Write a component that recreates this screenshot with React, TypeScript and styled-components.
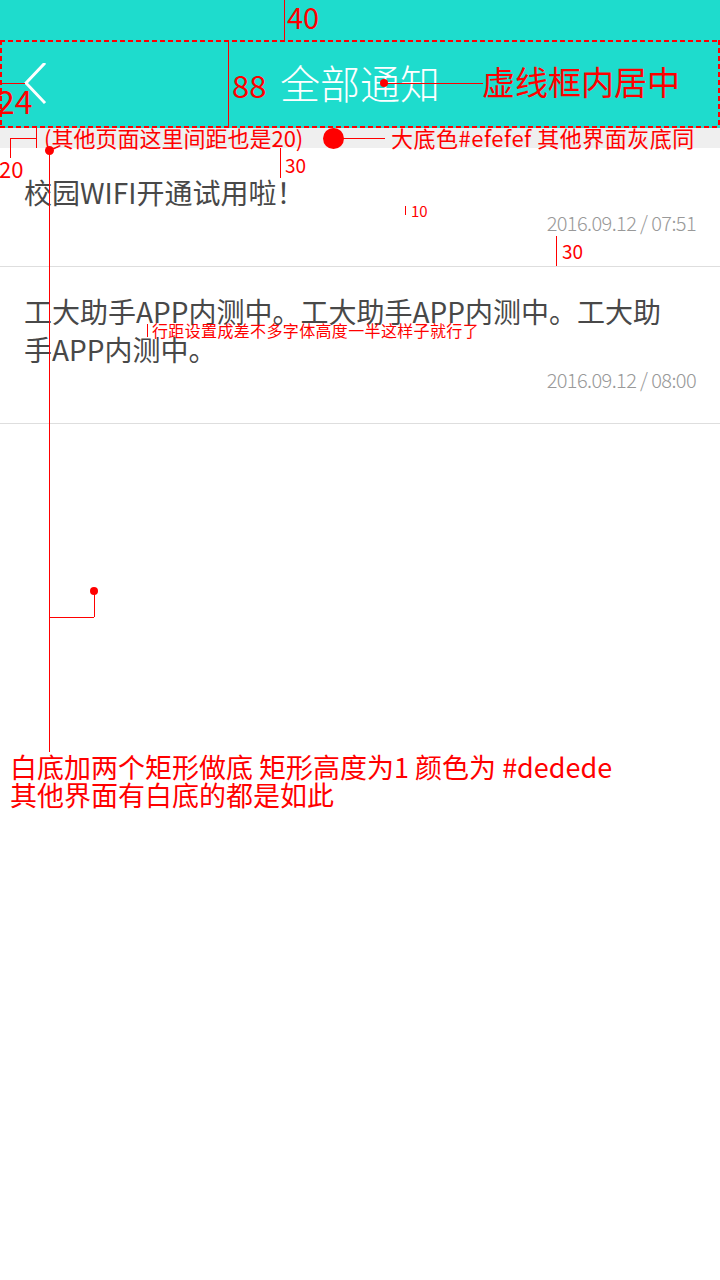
import styled, { createGlobalStyle } from "styled-components";

const TEAL = "#1edccd";
const MARK = "#ff0000";

const GlobalStyle = createGlobalStyle`
  html, body {
    margin: 0;
    padding: 0;
    background: #fff;
  }
  body {
    font-family: "Noto Sans CJK SC", "Noto Sans", sans-serif;
  }
`;

const Page = styled.div`
  position: relative;
  width: 720px;
  min-height: 1280px;
  background: #fff;
  overflow: hidden;
`;

const StatusBar = styled.div`
  height: 40px;
  background: ${TEAL};
`;

const dash = (dir: string) =>
  `repeating-linear-gradient(${dir}, ${MARK} 0 5px, transparent 5px 8px)`;

const NavBar = styled.header`
  position: relative;
  height: 88px;
  padding: 0 24px;
  background: ${TEAL};
  display: grid;
  grid-template-columns: 1fr auto 1fr;
  align-items: center;

  /* dashed guide frame of the design draft */
  &::after {
    content: "";
    position: absolute;
    inset: 0;
    background: ${dash("90deg")} top / 100% 2px no-repeat,
      ${dash("90deg")} bottom / 100% 2px no-repeat,
      ${dash("180deg")} left / 2px 100% no-repeat,
      ${dash("180deg")} right / 2px 100% no-repeat;
    pointer-events: none;
  }
`;

const BackButton = styled.button`
  justify-self: start;
  display: flex;
  padding: 0;
  border: 0;
  background: none;
  color: #fff;
  cursor: pointer;
`;

const Title = styled.h1`
  margin: 0 0 4px;
  font-size: 40px;
  line-height: 1;
  font-weight: 300;
  color: #fff;
`;

const Gap = styled.div`
  height: 20px;
  background: #efefef;
`;

const List = styled.ul`
  margin: 0;
  padding: 0;
  list-style: none;
  background: #fff;
`;

const Item = styled.li`
  padding: 25px 24px 31px;
  border-bottom: 1px solid #dedede;
`;

const ItemTitle = styled.p`
  margin: 0 24px 0 0;
  font-size: 28px;
  line-height: 38px;
  font-weight: 400;
  color: #484848;
`;

const ItemTime = styled.time`
  display: block;
  text-align: right;
  font-size: 20px;
  line-height: 24px;
  font-weight: 300;
  letter-spacing: -0.6px;
  color: #999;
`;

/* ---- design-draft annotations lying over the page ---- */

const Marks = styled.div`
  position: absolute;
  inset: 0;
  pointer-events: none;
  color: ${MARK};
`;

const Label = styled.span<{
  $x: number;
  $y: number;
  $size: number;
  $lh?: number;
  $ls?: number;
}>`
  position: absolute;
  left: ${(p) => p.$x}px;
  top: ${(p) => p.$y}px;
  font-size: ${(p) => p.$size}px;
  line-height: ${(p) => (p.$lh ? `${p.$lh}px` : 1)};
  letter-spacing: ${(p) => p.$ls ?? 0}px;
  white-space: pre;
`;

const VLine = styled.i<{ $x: number; $y: number; $h: number }>`
  position: absolute;
  left: ${(p) => p.$x}px;
  top: ${(p) => p.$y}px;
  width: 1px;
  height: ${(p) => p.$h}px;
  background: ${MARK};
`;

const HLine = styled.i<{ $x: number; $y: number; $w: number }>`
  position: absolute;
  left: ${(p) => p.$x}px;
  top: ${(p) => p.$y}px;
  width: ${(p) => p.$w}px;
  height: 1px;
  background: ${MARK};
`;

const Dot = styled.i<{ $x: number; $y: number; $d: number }>`
  position: absolute;
  left: ${(p) => p.$x - p.$d / 2}px;
  top: ${(p) => p.$y - p.$d / 2}px;
  width: ${(p) => p.$d}px;
  height: ${(p) => p.$d}px;
  border-radius: 50%;
  background: ${MARK};
`;

const notices = [
  { id: 1, title: "校园WIFI开通试用啦！", time: "2016.09.12 / 07:51" },
  {
    id: 2,
    title: "工大助手APP内测中。工大助手APP内测中。工大助手APP内测中。",
    time: "2016.09.12 / 08:00",
  },
];

function Annotations() {
  return (
    <Marks>
      <VLine $x={284} $y={0} $h={40} />
      <Label $x={287} $y={2} $size={29}>40</Label>

      <VLine $x={228} $y={40} $h={88} />
      <Label $x={232} $y={69} $size={31}>88</Label>

      <HLine $x={0} $y={83} $w={25} />
      <Label $x={-3} $y={84} $size={32}>24</Label>

      <Dot $x={384} $y={83} $d={8} />
      <HLine $x={384} $y={83} $w={99} />
      <Label $x={482} $y={65} $size={33}>虚线框内居中</Label>

      <VLine $x={36} $y={128} $h={20} />
      <HLine $x={10} $y={138} $w={26} />
      <VLine $x={10} $y={138} $h={20} />
      <Label $x={-1} $y={157} $size={22}>20</Label>
      <Label $x={44} $y={126} $size={22}>(其他页面这里间距也是20)</Label>

      <Dot $x={333} $y={138} $d={21} />
      <HLine $x={343} $y={138} $w={42} />
      <Label $x={391} $y={126} $size={22} $ls={0.5}>
        大底色#efefef 其他界面灰底同
      </Label>

      <VLine $x={280} $y={148} $h={30} />
      <Label $x={285} $y={155} $size={19}>30</Label>

      <VLine $x={405} $y={206} $h={9} />
      <Label $x={411} $y={203} $size={15}>10</Label>

      <VLine $x={556} $y={236} $h={30} />
      <Label $x={562} $y={241} $size={19}>30</Label>

      <VLine $x={147} $y={324} $h={13} />
      <Label $x={152} $y={322} $size={16} $ls={0.35}>
        行距设置成差不多字体高度一半这样子就行了
      </Label>

      <Dot $x={49} $y={150} $d={9} />
      <VLine $x={49} $y={150} $h={602} />
      <HLine $x={49} $y={617} $w={45} />
      <VLine $x={94} $y={591} $h={26} />
      <Dot $x={94} $y={591} $d={8} />

      <Label $x={10} $y={753} $size={27} $lh={28}>
        {"白底加两个矩形做底 矩形高度为1 颜色为 #dedede\n其他界面有白底的都是如此"}
      </Label>
    </Marks>
  );
}

export default function App() {
  return (
    <Page>
      <GlobalStyle />
      <StatusBar />
      <NavBar>
        <BackButton aria-label="返回">
          <svg width="22" height="42" viewBox="0 0 22 42" fill="none">
            <polyline
              points="20,1 2,20 20,39"
              stroke="currentColor"
              strokeWidth="3"
              strokeLinecap="square"
            />
          </svg>
        </BackButton>
        <Title>全部通知</Title>
      </NavBar>
      <Gap />
      <List>
        {notices.map((n) => (
          <Item key={n.id}>
            <ItemTitle>{n.title}</ItemTitle>
            <ItemTime>{n.time}</ItemTime>
          </Item>
        ))}
      </List>
      <Annotations />
    </Page>
  );
}
